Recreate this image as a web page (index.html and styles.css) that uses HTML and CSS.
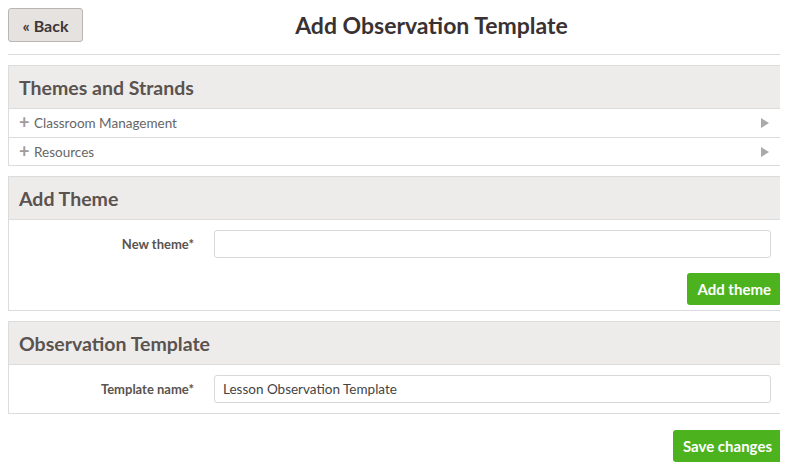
FILE: index.html
```html
<!DOCTYPE html>
<html>
<head>
<meta charset="utf-8">
<link rel="stylesheet" href="styles.css">
</head>
<body>
<div class="page">
  <div class="topbar">
    <button class="btn-back">« Back</button>
    <h1 class="title">Add Observation Template</h1>
  </div>

  <section class="panel">
    <div class="panel-head"><h2>Themes and Strands</h2></div>
    <div class="row">
      <span class="plus">+</span><span class="row-text">Classroom Management</span>
      <span class="arrow"></span>
    </div>
    <div class="row">
      <span class="plus">+</span><span class="row-text">Resources</span>
      <span class="arrow"></span>
    </div>
  </section>

  <section class="panel">
    <div class="panel-head"><h2>Add Theme</h2></div>
    <div class="panel-body body-theme">
      <div class="field">
        <label class="label">New theme*</label>
        <input class="input" type="text" value="">
      </div>
      <div class="actions">
        <button class="btn-green">Add theme</button>
      </div>
    </div>
  </section>

  <section class="panel">
    <div class="panel-head"><h2>Observation Template</h2></div>
    <div class="panel-body">
      <div class="field">
        <label class="label">Template name*</label>
        <input class="input" type="text" value="Lesson Observation Template">
      </div>
    </div>
  </section>

  <div class="footer">
    <button class="btn-green">Save changes</button>
  </div>
</div>
</body>
</html>
```

FILE: styles.css
```css
* { box-sizing: border-box; }
body {
  margin: 8px;
  font-family: Lato, "Open Sans", sans-serif;
  color: #444;
  background: #fff;
}
.page { width: 774px; }
.topbar {
  display: flex;
  align-items: center;
  padding-bottom: 12px;
  border-bottom: 1px solid #dcdcdc;
  margin-right: 2px;
  margin-bottom: 10px;
}
.btn-back {
  width: 75px;
  height: 34px;
  background: #e6e2e0;
  border: 1px solid #b9b5b3;
  border-radius: 3px;
  font-family: inherit;
  font-weight: bold;
  font-size: 16px;
  color: #3d3636;
  padding: 0;
}
.title {
  flex: 1;
  margin: 0;
  text-align: center;
  font-size: 23px;
  font-weight: bold;
  color: #3a3232;
}
.panel {
  border: 1px solid #dcdcdc;
  margin-bottom: 10px;
}
.panel-head {
  height: 43px;
  background: #eeecea;
  border-bottom: 1px solid #dcdcdc;
  display: flex;
  align-items: center;
  padding-left: 10px;
}
.panel-head h2 {
  margin: 0;
  font-size: 19.5px;
  font-weight: bold;
  color: #5a5350;
}
.row {
  height: 29px;
  display: flex;
  align-items: center;
  padding-left: 10px;
  padding-right: 12px;
  border-bottom: 1px solid #dcdcdc;
  font-size: 13.5px;
  color: #666;
}
.row:last-child { border-bottom: none; height: 27px; }
.plus {
  width: 15px;
  font-size: 18px;
  font-weight: bold;
  color: #a09c9a;
  line-height: 1;
  margin-top: -2px;
}
.row-text { flex: 1; }
.arrow {
  width: 0;
  height: 0;
  border-top: 5px solid transparent;
  border-bottom: 5px solid transparent;
  border-left: 8px solid #aaa;
}
.panel-body { padding: 10px; }
.body-theme { padding-bottom: 5px; }
.field {
  display: grid;
  grid-template-columns: 175px 1fr;
  column-gap: 20px;
  align-items: center;
}
.label {
  text-align: right;
  font-size: 13px;
  font-weight: bold;
  color: #5a5350;
}
.input {
  height: 28px;
  border: 1px solid #d8d8d8;
  border-radius: 3px;
  font-family: inherit;
  font-size: 13.5px;
  color: #444;
  padding: 0 8px;
  width: 100%;
}
.actions {
  display: flex;
  justify-content: flex-end;
  margin-top: 15px;
  margin-right: -10px;
}
.btn-green {
  height: 32px;
  background: #4cb31e;
  border: none;
  border-radius: 3px;
  color: #fff;
  font-family: inherit;
  font-weight: bold;
  font-size: 15px;
  padding: 0 10px;
}
.footer {
  display: flex;
  justify-content: flex-end;
  padding-top: 6px;
}
```
